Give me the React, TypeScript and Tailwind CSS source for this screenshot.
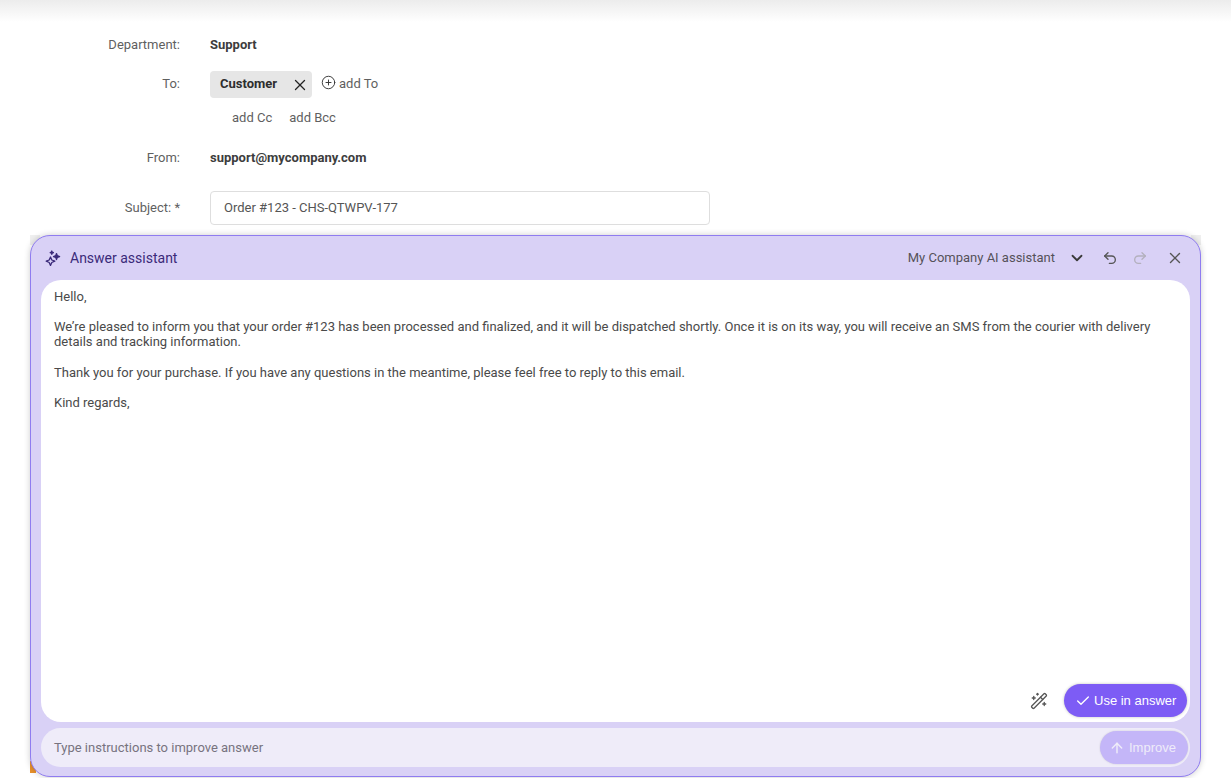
import React from 'react';
import { X, ChevronDown, Undo2, Redo2, Check, ArrowUp, CirclePlus, WandSparkles } from 'lucide-react';

const SparkIcon = () => (
  <svg width="16" height="16" viewBox="0 0 16 16" fill="none" stroke="#3b2a7a" strokeWidth="1.3" strokeLinejoin="round">
    <path d="M5.5 7 L6.8 10 L9.8 11.2 L6.8 12.5 L5.5 15.4 L4.2 12.5 L1.2 11.2 L4.2 10 Z" />
    <path d="M11.5 3.6 L12.3 5.7 L14.6 6.6 L12.3 7.4 L11.5 9.6 L10.7 7.4 L8.5 6.6 L10.7 5.7 Z" fill="#3b2a7a" />
    <path d="M6.8 1 L7.2 2.2 L8.4 2.7 L7.2 3.1 L6.8 4.4 L6.4 3.1 L5.2 2.7 L6.4 2.2 Z" fill="#3b2a7a" />
  </svg>
);

const FormRow = ({ label, className, children }: { label: string; className?: string; children: React.ReactNode }) => (
  <div className={`flex items-center ${className ?? ''}`}>
    <div className="w-[150px] text-right text-[#5f5f5f]">{label}</div>
    <div className="ml-[30px] flex-1">{children}</div>
  </div>
);

export default function App() {
  return (
    <div className="h-[778px] w-[1231px] overflow-hidden bg-white font-['Roboto',sans-serif] text-[13px] text-[#4a4a4a]">
      <div className="h-[22px] bg-gradient-to-b from-[#ececec] to-white" />

      <div className="px-[30px]">
        <FormRow label="Department:" className="mt-[14px] h-[18px]">
          <span className="font-bold text-[#3d3d3d]">Support</span>
        </FormRow>

        <FormRow label="To:" className="mt-[16px] h-[28px]">
          <div className="flex items-center">
            <div className="flex h-[27px] w-[102px] items-center rounded bg-[#e6e6e6] pl-[10px] font-bold text-[#2e2e2e]">
              Customer
              <X size={18} strokeWidth={1.7} className="ml-[14px] mt-[2px] text-[#222222]" />
            </div>
            <CirclePlus size={15} strokeWidth={1.5} className="ml-[9px] -mt-[3px] text-[#333333]" />
            <span className="ml-[3px] text-[#5f5f5f]">add To</span>
          </div>
        </FormRow>

        <div className="mt-[10px] flex h-[18px] gap-[17px] pl-[202px] text-[#5f5f5f]">
          <span>add Cc</span>
          <span>add Bcc</span>
        </div>

        <FormRow label="From:" className="mt-[23px] h-[18px]">
          <span className="font-bold text-[#3d3d3d]">support@mycompany.com</span>
        </FormRow>

        <FormRow label="Subject: *" className="mt-[24px] h-[34px]">
          <div className="flex h-[34px] w-[500px] items-center rounded border border-[#dedede] px-[13px] text-[#555555]">
            Order #123 - CHS-QTWPV-177
          </div>
        </FormRow>

        <div className="relative mt-[10px] h-[542px] w-[1171px]">
          <div className="absolute left-0 top-0 h-[10px] w-[10px] bg-[#efefef]" />
          <div className="absolute right-0 top-0 h-[10px] w-[10px] bg-[#efefef]" />
          <div className="absolute bottom-[4px] left-0 h-[12px] w-[6px] bg-[#e8912c]" />
          <div className="relative flex h-full flex-col rounded-[20px] border border-[#8f7cf0] bg-[#d9d1f6] shadow-[0_0_6px_rgba(0,0,0,0.2)]">
            <div className="flex h-[44px] shrink-0 items-center pl-[14px] pr-[16px]">
              <SparkIcon />
              <span className="ml-[9px] text-sm text-[#3b2a7a]">Answer assistant</span>
              <span className="ml-auto text-[#555159]">My Company AI assistant</span>
              <ChevronDown size={18} strokeWidth={2.4} className="ml-[13px] text-[#3a3a3a]" />
              <Undo2 size={16} strokeWidth={2} className="ml-[16px] text-[#555555]" />
              <Redo2 size={16} strokeWidth={2} className="ml-[14px] text-[#b3b0bd]" />
              <X size={18} strokeWidth={1.8} className="ml-[18px] text-[#555555]" />
            </div>

            <div className="mx-[10px] flex h-[442px] shrink-0 flex-col rounded-[20px] bg-white pl-[13px] pr-[3px] pt-[9px] leading-[15px] text-[#4a4a4a]">
              <p>Hello,</p>
              <p className="mt-[15px] pr-[30px]">
                We’re pleased to inform you that your order #123 has been processed and finalized, and it will be dispatched shortly. Once it is on its way, you will receive an SMS from the courier with delivery details and tracking information.
              </p>
              <p className="mt-[16px]">Thank you for your purchase. If you have any questions in the meantime, please feel free to reply to this email.</p>
              <p className="mt-[15px]">Kind regards,</p>
              <div className="mb-[5px] mt-auto flex items-center justify-end">
                <WandSparkles size={18} strokeWidth={1.7} className="mr-[16px] text-[#555555]" />
                <button className="flex h-[33px] w-[123px] items-center gap-[3px] rounded-full bg-[#7d5cf5] pl-[11px] font-['Liberation_Sans',sans-serif] text-[13px] text-white shadow-[0_0_3px_rgba(0,0,0,0.25)]">
                  <Check size={16} strokeWidth={2} />
                  Use in answer
                </button>
              </div>
            </div>

            <div className="mx-[10px] mt-[6px] flex h-[39px] shrink-0 items-center justify-between rounded-[20px] bg-[#efecf9] pl-[13px] pr-[2px] text-[#77737f]">
              <span>Type instructions to improve answer</span>
              <button className="flex h-[33px] w-[88px] items-center gap-[4px] rounded-full bg-[#c4b6f8] pl-[9px] font-['Liberation_Sans',sans-serif] text-[13px] text-[#efecf9] shadow-[0_0_2px_rgba(0,0,0,0.15)]">
                <ArrowUp size={16} strokeWidth={2.2} />
                Improve
              </button>
            </div>
          </div>
        </div>
      </div>
    </div>
  );
}
